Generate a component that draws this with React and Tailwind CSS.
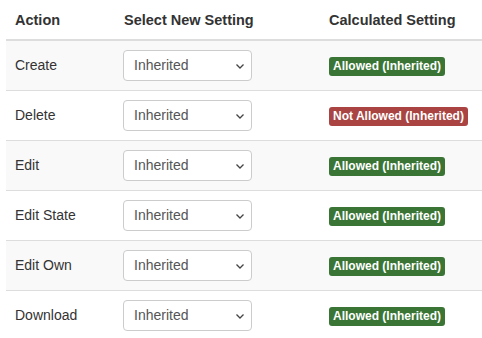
import React from "react";

const rows = [
  { action: "Create", allowed: true },
  { action: "Delete", allowed: false },
  { action: "Edit", allowed: true },
  { action: "Edit State", allowed: true },
  { action: "Edit Own", allowed: true },
  { action: "Download", allowed: true },
];

function Chevron() {
  return (
    <svg width="10" height="7" viewBox="0 0 10 7" className="absolute right-[6px] top-[12px]">
      <path d="M1.5 1.5 L5 5 L8.5 1.5" fill="none" stroke="#444" strokeWidth="1.3" />
    </svg>
  );
}

export default function App() {
  return (
    <div className="w-[482px] h-[338px] bg-white overflow-hidden pl-[6px] text-[#333]" style={{ fontFamily: '"Liberation Sans", Arial, sans-serif' }}>
      <div className="grid grid-cols-[109px_206px_161px] h-[41px] items-center border-b-2 border-[#ddd] text-[14.5px] font-bold">
        <div className="pl-[9px] pt-[2px]">Action</div>
        <div className="pl-[9px] pt-[2px]">Select New Setting</div>
        <div className="pl-[8px] pt-[2px]">Calculated Setting</div>
      </div>
      {rows.map((r, i) => (
        <div
          key={r.action}
          className={
            "grid grid-cols-[109px_206px_161px] h-[50px] items-center border-b border-[#ddd] text-[14px] " +
            (i % 2 === 0 ? "bg-[#f9f9f9]" : "bg-white")
          }
        >
          <div className="pl-[9px]">{r.action}</div>
          <div className="pl-[8px]">
            <div className="relative w-[129px] h-[31px] border border-[#ccc] rounded-[4px] bg-white flex items-center pl-[10px] text-[14px] text-[#555]">
              Inherited
              <Chevron />
            </div>
          </div>
          <div className="pl-[8px]">
            <span
              className={
                "inline-block text-white font-bold text-[12px] leading-[12px] px-[4px] pt-[3px] pb-[4px] rounded-[3px] " +
                (r.allowed ? "bg-[#3a7536]" : "bg-[#a94442]")
              }
            >
              {r.allowed ? "Allowed (Inherited)" : "Not Allowed (Inherited)"}
            </span>
          </div>
        </div>
      ))}
    </div>
  );
}
